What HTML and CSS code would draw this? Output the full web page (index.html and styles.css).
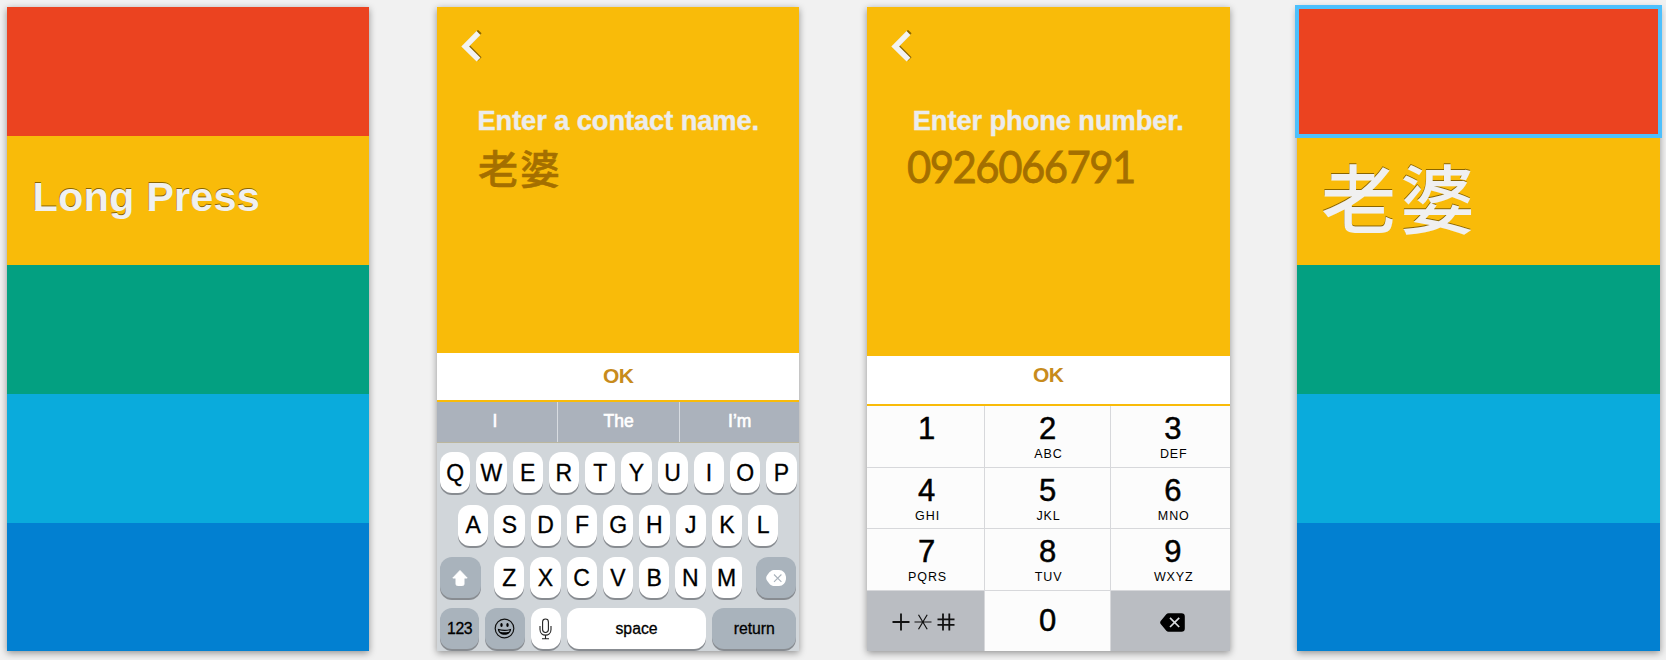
FILE: index.html
```html
<!DOCTYPE html>
<html lang="en">
<head>
<meta charset="utf-8">
<title>Speed dial storyboard</title>
<link rel="stylesheet" href="styles.css">
</head>
<body>
<main class="board">
  <section class="screen">
    <div class="band red"></div>
    <div class="band yellow"><span class="band-label">Long Press</span></div>
    <div class="band green"></div>
    <div class="band sky"></div>
    <div class="band blue"></div>
  </section>

  <section class="screen entry">
    <header class="prompt prompt-name">
      <svg class="back" width="22" height="32" viewBox="0 0 22 32"><path d="M18 2.300 4.700 16.300 18 29.700" transform="translate(.8 -.7)" fill="none" stroke="#8a6500" stroke-width="5"/><path d="M17.500 3 4.200 16.500 17.500 29.600" fill="none" stroke="#f3f3f3" stroke-width="5.500"/></svg>
      <h1 class="title">Enter a contact name.</h1>
      <p class="value value-name">老婆</p>
    </header>
    <button class="ok">OK</button>
    <div class="suggestions"><span>I</span><span>The</span><span>I’m</span></div>
    <div class="keyboard">
      <div class="row"><b>Q</b><b>W</b><b>E</b><b>R</b><b>T</b><b>Y</b><b>U</b><b>I</b><b>O</b><b>P</b></div>
      <div class="row row-a"><b>A</b><b>S</b><b>D</b><b>F</b><b>G</b><b>H</b><b>J</b><b>K</b><b>L</b></div>
      <div class="row">
        <b class="gray shift"><svg width="18" height="18" viewBox="0 0 18 18"><path d="M9 1.500 16.200 9H13v6a1.500 1.500 0 0 1-1.500 1.500h-5A1.500 1.500 0 0 1 5 15V9H1.800z" fill="#fff" stroke="#fff" stroke-linejoin="round"/></svg></b>
        <b>Z</b><b>X</b><b>C</b><b>V</b><b>B</b><b>N</b><b>M</b>
        <b class="gray delete"><svg width="20" height="16" viewBox="0 0 20 16"><path d="M9 0h4a7 7.900 0 0 1 0 16H9C5 16 3.500 14 1.300 11Q-1 8 1.300 5C3.500 2 5 0 9 0z" fill="#fff"/><path d="m8 4.500 7.400 7.400m0-7.400L8 11.900" stroke="#a9b2bb" stroke-width="1.100"/></svg></b>
      </div>
      <div class="row row-last">
        <b class="gray word numbers">123</b>
        <b class="gray emoji"><svg width="21" height="21" viewBox="0 0 21 21"><circle cx="10.500" cy="10.500" r="9.300" fill="none" stroke="#111" stroke-width="1.200"/><ellipse cx="7.500" cy="7" rx="1.200" ry="2"/><ellipse cx="13.500" cy="7" rx="1.200" ry="2"/><path d="M3.800 10.800q6.700 2 13.400 0c-.5 8-12.900 8-13.400 0z"/><path d="M5.300 12.300q5.200 1.300 10.400 0l-.6 1.500q-4.600 1-9.200 0z" fill="#a9b3bc"/></svg></b>
        <b class="mic"><svg width="13" height="22" viewBox="0 0 13 22" fill="none" stroke="#222" stroke-width="1.100"><rect x="3.600" y="1" width="5.800" height="13.500" rx="2.900"/><path d="M1 8v3.500C1 19 12 19 12 11.500V8M6.500 17.200V21M3 20.700h7"/></svg></b>
        <b class="word space">space</b>
        <b class="gray word return">return</b>
      </div>
    </div>
  </section>

  <section class="screen entry">
    <header class="prompt prompt-phone">
      <svg class="back" width="22" height="32" viewBox="0 0 22 32"><path d="M18 2.300 4.700 16.300 18 29.700" transform="translate(.8 -.7)" fill="none" stroke="#8a6500" stroke-width="5"/><path d="M17.500 3 4.200 16.500 17.500 29.600" fill="none" stroke="#f3f3f3" stroke-width="5.500"/></svg>
      <h1 class="title">Enter phone number.</h1>
      <p class="value value-phone">0926066791</p>
    </header>
    <button class="ok ok-phone">OK</button>
    <div class="keypad">
      <div>1</div><div>2<small>ABC</small></div><div>3<small>DEF</small></div>
      <div>4<small>GHI</small></div><div>5<small>JKL</small></div><div>6<small>MNO</small></div>
      <div>7<small>PQRS</small></div><div>8<small>TUV</small></div><div>9<small>WXYZ</small></div>
      <div class="pad-gray pad-symbols"><svg width="64" height="18" viewBox="0 0 64 18" fill="none" stroke="#111" stroke-width="1.800"><path d="M.5 9h17M9 .5v17"/><path d="M22.500 9h17M26.500 1.800l8.700 14.400m0-14.400-8.700 14.400" stroke-width="1.200"/><path d="M45.500 6.300h17M45.500 11.800h17M51 .5v17M57.300.5v17"/></svg></div>
      <div class="zero">0</div>
      <div class="pad-gray pad-delete"><svg width="25" height="19" viewBox="0 0 25 19"><path d="M8.500.3h13A3.300 3.300 0 0 1 24.800 3.600v11.800a3.300 3.300 0 0 1-3.300 3.300h-13Q7.200 18.700 6.300 17.700L.7 11Q-.4 9.500.7 8L6.300 1.300Q7.200.3 8.500.3z"/><path d="m10 4.800 9.200 9.200m0-9.200L10 14" stroke="#d9dbde" stroke-width="1.700"/></svg></div>
    </div>
  </section>

  <section class="screen">
    <div class="band red selected"></div>
    <div class="band yellow"><span class="band-name">老婆</span></div>
    <div class="band green"></div>
    <div class="band sky"></div>
    <div class="band blue"></div>
  </section>
</main>
</body>
</html>
```
FILE: styles.css
```css
* { box-sizing: border-box; }
body { margin: 0; background: #f1f1f1; font-family: "Liberation Sans", Arial, sans-serif; }
.board { display: flex; gap: 67.600px; height: 660px; padding: 7px; overflow: hidden; }
.screen { display: flex; flex: none; flex-direction: column; width: 362.450px; height: 644.400px; box-shadow: 0 2px 7px rgba(0,0,0,.4); }

.band { display: flex; flex: 1; align-items: center; padding-left: 25px; }
.red { background: #eb4320; }
.yellow { background: #f9bb09; }
.green { background: #03a081; }
.sky { background: #0aabdc; }
.blue { background: #0280d1; }
.band-label, .band-name { color: #f0f0f0; text-shadow: -.4px -1px 0 #8a6500; white-space: nowrap; }
.band-label { font-size: 41.500px; font-weight: 700; letter-spacing: .15px; line-height: 48px; margin: -7px 0 0 .5px; }
.band-name { font: 500 75px/100px "Noto Sans CJK TC", sans-serif; letter-spacing: 4px; margin: -9px 0 0 -1px; }
.selected { outline: 4px solid #4dc0fc; outline-offset: -2px; z-index: 1; }

.entry { background: #f9bb09; }
.prompt { flex: none; padding-top: 23px; }
.prompt-name { height: 346px; }
.prompt-phone { height: 349px; }
.back { display: block; margin-left: 24px; }
.title { margin: 43px 0 0; text-align: center; font-size: 27.300px; line-height: 32px; letter-spacing: -.1px; color: #ececec; white-space: nowrap; -webkit-text-stroke: .4px #ececec; }
.value { margin: 0; color: #a46f00; white-space: nowrap; }
.value-name { padding-left: 41px; font: 500 40px/60px "Noto Sans CJK TC", sans-serif; letter-spacing: 2px; -webkit-text-stroke: .5px #a46f00; }
.value-phone { padding-left: 40px; font: 400 45px/60px Lato, sans-serif; letter-spacing: -1.600px; transform: scaleX(.93); transform-origin: 40px 50%; margin-top: -1px; -webkit-text-stroke: .8px #a46f00; }
.ok { flex: none; height: 47px; padding: 0 0 2px; border: 0; background: #fff; color: #c78b1c; font: 700 21px/44px "Liberation Sans", Arial, sans-serif; letter-spacing: -.5px; }
.ok-phone { height: 47.500px; padding-bottom: 9px; line-height: 38px; }

.suggestions { display: grid; grid-template-columns: 120px 122px 1fr; flex: none; height: 40.500px; margin-top: 2px; background: #abb2bc; color: #fff; font-size: 17.500px; line-height: 39px; text-align: center; -webkit-text-stroke: .6px #fff; border-bottom: 1px solid #bbb69d; }
.suggestions span { padding-right: 4px; }
.suggestions span + span { padding: 0; border-left: 1px solid #d8dce1; }

.keyboard { display: flex; flex: 1; flex-direction: column; gap: 11.500px; padding: 9.500px 3px 0; background: #d1d6da; }
.row { display: flex; gap: 6px; height: 41px; flex: none; }
.row-a { padding-left: 18px; }
.row-last { margin-top: -2px; }
.row b { display: flex; flex: none; align-items: center; justify-content: center; width: 30.250px; height: 41px; padding-top: 1px; border-radius: 12px; background: #fff; box-shadow: 0 2px 0 #888c91; font-weight: 400; font-size: 23px; color: #000; -webkit-text-stroke: .3px #000; }
.row .gray { background: #a9b3bc; }
.row .shift { width: 40.500px; margin-right: 7.500px; }
.row .delete { width: 40.500px; margin-left: 8px; }
.row .word { font-size: 15.800px; }
.row .numbers { width: 39px; letter-spacing: -.5px; }
.row .emoji { width: 39.500px; }
.row .space { width: 139.500px; }
.row .return { width: 84px; }

.keypad { display: grid; grid-template-columns: 118px 126px 1fr; grid-template-rows: 62px 61.500px 62px 1fr; flex: 1; margin-top: 2px; }
.keypad div { display: flex; flex-direction: column; align-items: center; padding-top: 5px; border: solid #d7d8db; border-width: 0 1px 1px 0; background: #fcfcfc; font-size: 31px; line-height: 36px; -webkit-text-stroke: .5px #000; }
.keypad div:nth-child(3n+1) { padding-left: 2px; }
.keypad div:nth-child(3n) { border-right: 0; padding-left: 5px; }
.keypad div:nth-last-child(-n+3) { border-bottom: 0; }
.keypad small { font-size: 12.500px; line-height: 14px; letter-spacing: .9px; padding-left: 2px; -webkit-text-stroke: 0; }
.keypad .zero { padding-top: 12px; }
.keypad .pad-gray { background: #babdc2; padding-top: 22px; }
.keypad .pad-symbols { padding: 22px 5px 0 0; }
```
